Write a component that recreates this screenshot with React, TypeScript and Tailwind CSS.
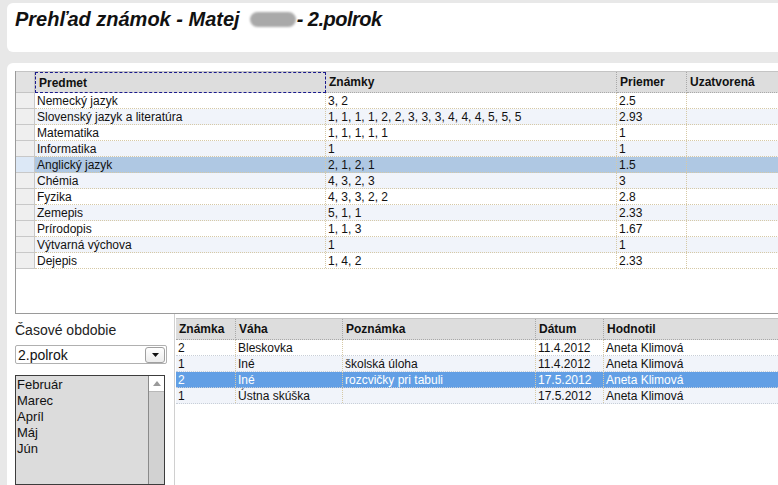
import React from 'react';

const subjects: { name: string; grades: string; avg: string }[] = [
    { name: 'Nemecký jazyk', grades: '3, 2', avg: '2.5' },
    { name: 'Slovenský jazyk a literatúra', grades: '1, 1, 1, 1, 2, 2, 3, 3, 3, 4, 4, 4, 5, 5, 5', avg: '2.93' },
    { name: 'Matematika', grades: '1, 1, 1, 1, 1', avg: '1' },
    { name: 'Informatika', grades: '1', avg: '1' },
    { name: 'Anglický jazyk', grades: '2, 1, 2, 1', avg: '1.5' },
    { name: 'Chémia', grades: '4, 3, 2, 3', avg: '3' },
    { name: 'Fyzika', grades: '4, 3, 3, 2, 2', avg: '2.8' },
    { name: 'Zemepis', grades: '5, 1, 1', avg: '2.33' },
    { name: 'Prírodopis', grades: '1, 1, 3', avg: '1.67' },
    { name: 'Výtvarná výchova', grades: '1', avg: '1' },
    { name: 'Dejepis', grades: '1, 4, 2', avg: '2.33' },
];

const details = [
    { grade: '2', weight: 'Bleskovka', note: '', date: '11.4.2012', teacher: 'Aneta Klimová' },
    { grade: '1', weight: 'Iné', note: 'školská úloha', date: '11.4.2012', teacher: 'Aneta Klimová' },
    { grade: '2', weight: 'Iné', note: 'rozcvičky pri tabuli', date: '17.5.2012', teacher: 'Aneta Klimová' },
    { grade: '1', weight: 'Ústna skúška', note: '', date: '17.5.2012', teacher: 'Aneta Klimová' },
];

const months = ['Február', 'Marec', 'Apríl', 'Máj', 'Jún'];

const HeadCell: React.FC<{ w: string; label: string; focus?: boolean; last?: boolean }> = ({ w, label, focus, last }) => (
    <div
        className={`${w} shrink-0 h-full flex items-center pl-[3px] font-bold text-[12px] ${
            focus ? 'border border-dashed border-[#1a1a8c]' : last ? 'border-b border-dotted border-[#a8a8a8]' : 'border-r border-b border-dotted border-[#a8a8a8]'
        }`}
    >
        {label}
    </div>
);

const Cell: React.FC<{ w: string; children?: React.ReactNode; last?: boolean }> = ({ w, children, last }) => (
    <div className={`${w} shrink-0 h-full flex items-center pl-[2px] truncate ${last ? '' : 'border-r border-dotted border-[#d6c9a6]'}`}>
        {children}
    </div>
);

export default function App() {
    return (
        <div className="w-[778px] h-[485px] bg-[#e8e8e8] overflow-hidden font-['Liberation_Sans',Arial,sans-serif] text-[#111]">
            <div className="ml-[7px] mt-[3px] h-[49px] bg-white rounded-l-[6px] pl-[8px] pt-[4px]">
                <h1 className="text-[20px] leading-[24px] font-bold italic flex items-center whitespace-pre">
                    <span>Prehľad známok - Matej</span>
                    <span className="inline-block w-[46px] h-[15px] ml-[10px] mr-[1px] rounded-full bg-[#a9a9a9] blur-[1px]"></span>
                    <span className="tracking-[-0.5px]">- 2.polrok</span>
                </h1>
            </div>

            <div className="ml-[7px] mt-[11px] h-[422px] bg-white rounded-tl-[6px] pl-[8px] pt-[8px] flex flex-col">
                {/* predmety */}
                <div className="h-[243px] shrink-0 border-l border-b border-[#9a9a9a] flex flex-col text-[12px]">
                    <div className="h-[22px] flex bg-[#dddddd] border-t border-[#c4c4c4]">
                        <div className="w-[19px] shrink-0 h-full border-r border-b border-[#c4c4c4] bg-[#e2e2e2]"></div>
                        <HeadCell w="w-[291px]" label="Predmet" focus />
                        <HeadCell w="w-[291px]" label="Známky" />
                        <HeadCell w="w-[70px]" label="Priemer" />
                        <HeadCell w="w-[100px]" label="Uzatvorená" last />
                    </div>
                    {subjects.map((s, i) => {
                        const sel = i === 4;
                        const bg = sel ? 'bg-[#afc8e3]' : i % 2 === 1 ? 'bg-[#f1f4fa]' : 'bg-white';
                        return (
                            <div key={s.name} className="h-[16px] flex">
                                <div
                                    className={`w-[19px] shrink-0 h-full border-r border-b border-[#c8c8c8] ${
                                        sel ? 'bg-[#dce8f6]' : 'bg-[#efefef]'
                                    }`}
                                ></div>
                                <div className={`flex flex-1 h-full border-b border-dotted border-[#d6c9a6] ${bg}`}>
                                    <Cell w="w-[291px]">{s.name}</Cell>
                                    <Cell w="w-[291px]">{s.grades}</Cell>
                                    <Cell w="w-[70px]">{s.avg}</Cell>
                                    <Cell w="w-[100px]" last />
                                </div>
                            </div>
                        );
                    })}
                </div>

                {/* spodna cast */}
                <div className="flex flex-1 min-h-0">
                    <div className="w-[152px] shrink-0 flex flex-col pt-[8px]">
                        <div className="text-[14px] leading-[16px] text-[#222]">Časové obdobie</div>
                        <div className="mt-[7px] h-[19px] w-[152px] border border-[#b0b0b0] rounded-[2px] flex items-center justify-between bg-white">
                            <span className="pl-[2px] text-[14px] leading-[16px]">2.polrok</span>
                            <span className="w-[20px] h-[16px] mr-[1px] border border-[#a0a0a0] rounded-[3px] bg-gradient-to-b from-white to-[#ececec] flex items-center justify-center">
                                <svg width="7" height="4" viewBox="0 0 7 4">
                                    <path d="M0 0 L7 0 L3.5 4 Z" fill="#111" />
                                </svg>
                            </span>
                        </div>
                        <div className="mt-[11px] flex-1 w-[150px] border border-[#3c3c3c] bg-[#dcdcdc] flex">
                            <div className="flex-1 pt-[1px] pl-[1px] text-[13px] leading-[16px]">
                                {months.map((m) => (
                                    <div key={m}>{m}</div>
                                ))}
                            </div>
                            <div className="w-[16px] shrink-0 border-l border-[#8a8a8a] bg-[#d2d2d2]">
                                <div className="h-[16px] bg-white border-b border-[#b8b8b8] flex items-center justify-center">
                                    <svg width="8" height="5" viewBox="0 0 8 5">
                                        <path d="M0 5 L4 0 L8 5 Z" fill="#9a9a9a" />
                                    </svg>
                                </div>
                            </div>
                        </div>
                    </div>

                    <div className="ml-[7px] flex-1 border-l border-[#d0d0d0] pt-[4px] pl-[1px] text-[12px]">
                        <div className="h-[22px] flex bg-[#dddddd] border-t border-[#c4c4c4]">
                            <HeadCell w="w-[60px]" label="Známka" />
                            <HeadCell w="w-[107px]" label="Váha" />
                            <HeadCell w="w-[193px]" label="Poznámka" />
                            <HeadCell w="w-[68px]" label="Dátum" />
                            <HeadCell w="w-[180px]" label="Hodnotil" last />
                        </div>
                        {details.map((d, i) => {
                            const sel = i === 2;
                            const bg = sel ? 'bg-[#629fe5] text-white' : i % 2 === 1 ? 'bg-[#f1f4fa]' : 'bg-white';
                            return (
                                <div key={i} className={`h-[16px] flex border-b border-dotted border-[#c8cfd8] ${bg}`}>
                                    <Cell w="w-[60px]">{d.grade}</Cell>
                                    <Cell w="w-[107px]">{d.weight}</Cell>
                                    <Cell w="w-[193px]">{d.note}</Cell>
                                    <Cell w="w-[68px]">{d.date}</Cell>
                                    <Cell w="w-[180px]" last>{d.teacher}</Cell>
                                </div>
                            );
                        })}
                    </div>
                </div>
            </div>
        </div>
    );
}
